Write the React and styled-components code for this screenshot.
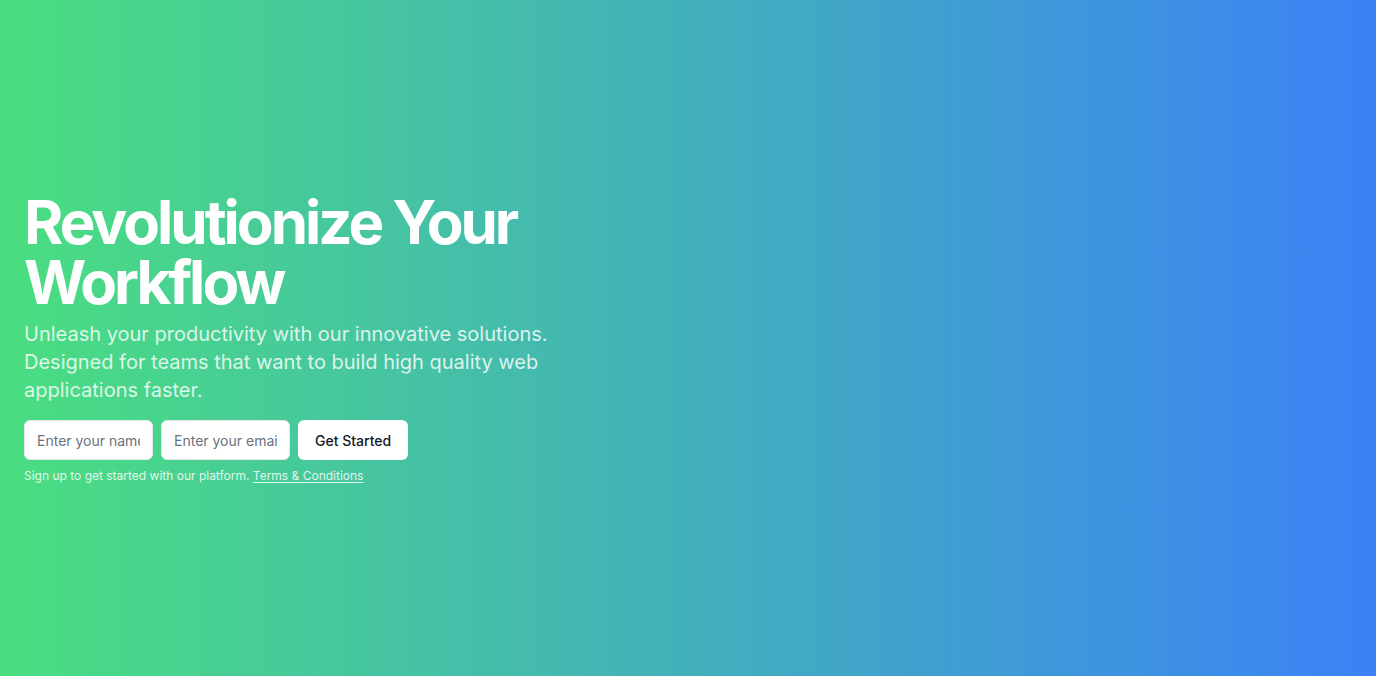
import React from "react";
import styled, { createGlobalStyle } from "styled-components";

const GlobalStyle = createGlobalStyle`
  * { box-sizing: border-box; }
  html, body { margin: 0; padding: 0; }
  body { font-family: Inter, "Noto Sans", sans-serif; }
`;

const Hero = styled.section`
  height: 676px;
  width: 100%;
  display: flex;
  align-items: center;
  padding: 0 24px;
  background: linear-gradient(to right, #4ade80, #3b82f6);
`;

const Content = styled.div`
  display: flex;
  flex-direction: column;
  align-items: flex-start;
`;

const Title = styled.h1`
  margin: 0;
  font-size: 60px;
  line-height: 60px;
  font-weight: 700;
  letter-spacing: -0.05em;
  color: #fff;
`;

const Lead = styled.p`
  margin: 8px 0 0;
  max-width: 600px;
  font-size: 20px;
  line-height: 28px;
  color: rgba(255, 255, 255, 0.82);
`;

const Form = styled.form`
  display: flex;
  gap: 8px;
  margin-top: 16px;
`;

const Input = styled.input`
  width: 129px;
  height: 40px;
  padding: 0 12px;
  border: 1px solid #e5e7eb;
  border-radius: 6px;
  background: #fff;
  font-family: inherit;
  font-size: 14px;
  color: #111827;
  outline: none;
  &::placeholder { color: #6b7280; }
`;

const Button = styled.button`
  height: 40px;
  padding: 0 17px;
  border: none;
  border-radius: 6px;
  background: #fff;
  color: #111827;
  font-family: inherit;
  font-size: 14px;
  font-weight: 500;
  cursor: pointer;
`;

const Note = styled.p`
  margin: 8px 0 0;
  font-size: 12px;
  line-height: 16px;
  color: rgba(255, 255, 255, 0.85);
`;

const Link = styled.a`
  color: inherit;
  text-decoration: underline;
  text-underline-offset: 2px;
`;

export default function App() {
  return (
    <>
      <GlobalStyle />
      <Hero>
        <Content>
          <Title>
            Revolutionize Your
            <br />
            Workflow
          </Title>
          <Lead>
            Unleash your productivity with our innovative solutions. Designed for
            teams that want to build high quality web applications faster.
          </Lead>
          <Form onSubmit={(e) => e.preventDefault()}>
            <Input placeholder="Enter your name" type="text" />
            <Input placeholder="Enter your email" type="email" />
            <Button type="submit">Get Started</Button>
          </Form>
          <Note>
            Sign up to get started with our platform.{" "}
            <Link href="#">Terms &amp; Conditions</Link>
          </Note>
        </Content>
      </Hero>
    </>
  );
}
